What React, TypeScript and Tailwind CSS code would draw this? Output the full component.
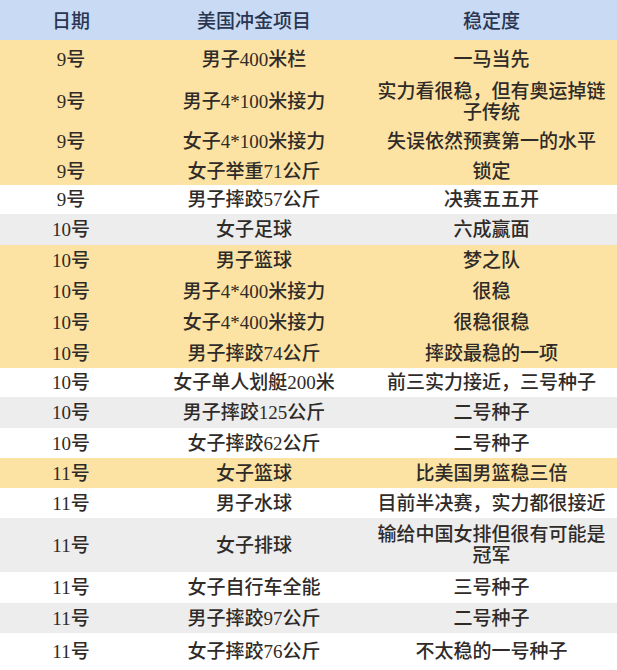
import React from "react";

type Row = { d: string; e: string; s: string; bg: string; h: string };

const Y = "bg-[#fde3a3]";
const W = "bg-white";
const G = "bg-[#ededed]";

const rows: Row[] = [
  { d: "9号", e: "男子400米栏", s: "一马当先", bg: Y, h: "h-[38px]" },
  { d: "9号", e: "男子4*100米接力", s: "实力看很稳，但有奥运掉链子传统", bg: Y, h: "h-[47px]" },
  { d: "9号", e: "女子4*100米接力", s: "失误依然预赛第一的水平", bg: Y, h: "h-[33px]" },
  { d: "9号", e: "女子举重71公斤", s: "锁定", bg: Y, h: "h-[27px]" },
  { d: "9号", e: "男子摔跤57公斤", s: "决赛五五开", bg: W, h: "h-[29px]" },
  { d: "10号", e: "女子足球", s: "六成赢面", bg: G, h: "h-[31px]" },
  { d: "10号", e: "男子篮球", s: "梦之队", bg: Y, h: "h-[31px]" },
  { d: "10号", e: "男子4*400米接力", s: "很稳", bg: Y, h: "h-[31px]" },
  { d: "10号", e: "女子4*400米接力", s: "很稳很稳", bg: Y, h: "h-[31px]" },
  { d: "10号", e: "男子摔跤74公斤", s: "摔跤最稳的一项", bg: Y, h: "h-[30px]" },
  { d: "10号", e: "女子单人划艇200米", s: "前三实力接近，三号种子", bg: W, h: "h-[29px]" },
  { d: "10号", e: "男子摔跤125公斤", s: "二号种子", bg: G, h: "h-[31px]" },
  { d: "10号", e: "女子摔跤62公斤", s: "二号种子", bg: W, h: "h-[30px]" },
  { d: "11号", e: "女子篮球", s: "比美国男篮稳三倍", bg: Y, h: "h-[30px]" },
  { d: "11号", e: "男子水球", s: "目前半决赛，实力都很接近", bg: W, h: "h-[30px]" },
  { d: "11号", e: "女子排球", s: "输给中国女排但很有可能是冠军", bg: G, h: "h-[54px]" },
  { d: "11号", e: "女子自行车全能", s: "三号种子", bg: W, h: "h-[31px]" },
  { d: "11号", e: "男子摔跤97公斤", s: "二号种子", bg: G, h: "h-[30px]" },
  { d: "11号", e: "女子摔跤76公斤", s: "不太稳的一号种子", bg: W, h: "h-[37px]" },
];

export default function App() {
  return (
    <div
      className="w-[617px] h-[670px] overflow-hidden bg-white text-[#2f2b28] text-[19px] font-medium"
      style={{ fontFamily: '"Liberation Serif", "Noto Sans CJK SC", serif' }}
    >
      <div className="grid grid-cols-[142px_224px_251px] h-[40px] bg-[#c9daf5] text-[#2a3650] items-center text-center leading-[21px] pt-[2px]">
        <div>日期</div>
        <div>美国冲金项目</div>
        <div className="px-[7px]">稳定度</div>
      </div>
      {rows.map((r, i) => (
        <div
          key={i}
          className={`grid grid-cols-[142px_224px_251px] items-center text-center leading-[21px] ${r.bg} ${r.h}`}
        >
          <div>{r.d}</div>
          <div>{r.e}</div>
          <div className="px-[7px]">{r.s}</div>
        </div>
      ))}
    </div>
  );
}
